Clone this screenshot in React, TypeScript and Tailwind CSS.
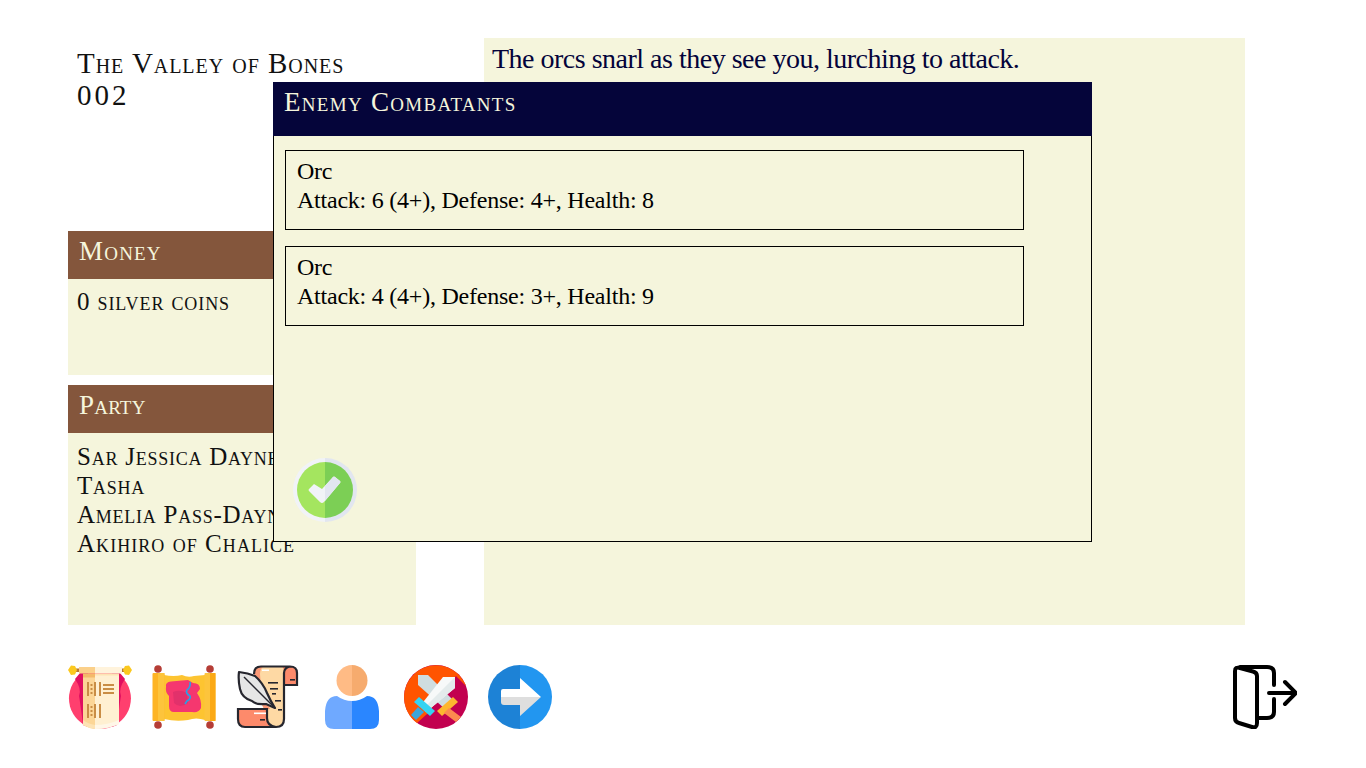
import React from "react";

const serif = "font-['Liberation_Serif',serif]";
const caps = "font-['Liberation_Serif',serif] [font-variant:small-caps]";

function Banner() {
  return (
    <svg viewBox="0 0 64 64" className="w-16 h-16 shrink-0">
      <path d="M32 3 A31 30.5 0 1 1 31.9 3 Z" fill="#ff3f6e" />
      <path d="M7 14 Q14 24 11 31 Q12 36 15 60 L20 62 V8 H12 Z" fill="#e00f60" />
      <path d="M57 14 Q50 24 53 31 Q52 36 49 60 L44 62 V8 H52 Z" fill="#e00f60" />
      <path d="M15 9 H27 V64 Q20 63 15 60 Z" fill="#fcd697" />
      <path d="M27 9 H51 V59 Q40 64 27 64 Z" fill="#fff0d2" />
      <path d="M15 55 Q20 59 27 60 V64 Q20 63 15 60 Z" fill="#fde3b4" />
      <path d="M27 60 Q40 60 51 55 V59 Q40 64 27 64 Z" fill="#fff7e8" />
      <rect x="11" y="2" width="16" height="6.5" fill="#fbd08a" />
      <rect x="27" y="2" width="27" height="6.5" fill="#fff3dc" />
      <rect x="15" y="8.5" width="12" height="4" fill="#f4b96a" />
      <rect x="27" y="8.5" width="24" height="2" fill="#fde3b4" />
      <rect x="8" y="3.5" width="3" height="3.5" fill="#b8782f" />
      <rect x="54" y="3.5" width="3" height="3.5" fill="#b8782f" />
      <path d="M0 5 L3 0.5 L7 1 L9 5 L7 9.5 L3 10 Z" fill="#fbc81f" />
      <path d="M64 5 L61 0.5 L57 1 L55 5 L57 9.5 L61 10 Z" fill="#fbc81f" />
      <g fill="#c98d45">
        <rect x="19" y="17" width="2" height="14" />
        <rect x="26" y="17" width="2" height="14" />
        <rect x="31" y="17" width="2" height="14" />
        <rect x="35" y="19" width="11" height="2" />
        <rect x="35" y="23" width="11" height="2" />
        <rect x="35" y="27" width="11" height="2" />
        <rect x="19" y="39" width="2" height="14" />
        <rect x="26" y="39" width="2" height="14" />
        <rect x="31" y="39" width="2" height="14" />
        <rect x="22.5" y="19" width="2" height="2" />
        <rect x="22.5" y="23" width="2" height="2" />
        <rect x="22.5" y="27" width="2" height="2" />
        <rect x="22.5" y="41" width="2" height="2" />
        <rect x="22.5" y="45" width="2" height="2" />
        <rect x="22.5" y="49" width="2" height="2" />
      </g>
    </svg>
  );
}

function MapScroll() {
  return (
    <svg viewBox="0 0 64 64" className="w-16 h-16 shrink-0">
      <path d="M12 10 Q22 12 30 10 Q36 13 42 11 L53 10 V55 Q44 52 36 55 Q24 57 12 54 Z" fill="#fdc431" />
      <rect x="0.5" y="8" width="12" height="48" rx="1" fill="#fdb424" />
      <rect x="6" y="8" width="6.5" height="48" fill="#fdc43c" />
      <rect x="52.5" y="8" width="11" height="48" rx="1" fill="#fdc43c" />
      <rect x="58" y="8" width="5.5" height="48" fill="#fba915" />
      <circle cx="6" cy="4" r="3.8" fill="#b53d36" />
      <circle cx="58" cy="4" r="3.8" fill="#b53d36" />
      <circle cx="6" cy="60" r="3.8" fill="#b53d36" />
      <circle cx="58" cy="60" r="3.8" fill="#b53d36" />
      <path d="M14 22 Q13 17 19 16.5 L36 15 L41 18 Q48 18 48 24 L45 28 Q50 35 49 43 Q47 48 40 47 H22 Q17 47 17 41 V31 Q13 27 14 22 Z" fill="#f5376f" />
      <path d="M21 27 Q28 24 35 28 L36 38 Q28 44 22 38 Z" fill="#e2316b" />
      <path d="M38 17 Q39 22 35 25 Q33 28 38 31 Q39 34 35 36 L33 39" fill="none" stroke="#2b9fe6" strokeWidth="1.7" />
    </svg>
  );
}

function QuillScroll() {
  return (
    <svg viewBox="0 0 64 64" className="w-16 h-16 shrink-0">
      <path d="M18 9 Q18 1.5 25 1.5 H54 Q61 1.5 61 8 V20 H48 V54 Q48 62 40 62 H9 Q2 62 2 54 V44 H28 Q18 25 18 9 Z" fill="#fed9a4" />
      <path d="M18 9 Q18 1.5 25 1.5 H28 Q24 3 24 9 Q24 25 34 44 H28 Q18 25 18 9 Z" fill="#fd9a78" />
      <path d="M46 1.5 H54 Q61 1.5 61 8 V20 H48 V8 Q48 3 46 1.5 Z" fill="#fd8a6b" />
      <path d="M2 44 H31 V53 Q31 60 39 62 H9 Q2 62 2 54 Z" fill="#fd8a6b" />
      <path d="M18 9 Q18 1.5 25 1.5 H54 Q61 1.5 61 8 V20 H48 V54 Q48 62 40 62 H9 Q2 62 2 54 V44 H31 V53 Q31 61 40 62 M48 20 V8 Q48 3 54 1.5" fill="none" stroke="#26262e" strokeWidth="2.2" />
      <path d="M3 7 Q12 8 19 11 Q27 18 31 28 Q34 35 39 43 L30 39 Q20 40 16 36 Q6 33 4 24 Q2 15 3 7 Z" fill="#e6e6e6" stroke="#26262e" strokeWidth="2.2" strokeLinejoin="round" />
      <path d="M8 12 L39 43" stroke="#26262e" strokeWidth="1.4" />
      <g fill="#26262e">
        <rect x="32" y="17" width="10" height="1.6" />
        <rect x="34" y="23" width="8" height="1.6" />
        <rect x="36" y="28" width="4" height="1.6" />
        <rect x="39" y="35" width="6" height="1.6" />
        <rect x="42" y="44" width="4" height="1.6" />
        <rect x="54" y="14" width="5" height="1.6" />
        <rect x="24" y="54" width="5" height="1.6" />
      </g>
      <rect x="26" y="4.5" width="7" height="1.5" fill="#fff" />
      <rect x="18" y="47.5" width="12" height="1.6" fill="#fff" />
    </svg>
  );
}

function Person() {
  return (
    <svg viewBox="0 0 64 64" className="w-16 h-16 shrink-0">
      <path d="M32 0 A15.5 15.5 0 0 0 32 31 Z" fill="#ffbb85" />
      <path d="M32 0 A15.5 15.5 0 0 1 32 31 Z" fill="#f6ab6e" />
      <path d="M32 36 Q24 36 17 31 Q6 31 5 46 V55 Q5 64 14 64 H32 Z" fill="#6fa9ff" />
      <path d="M32 36 Q40 36 47 31 Q58 31 59 46 V55 Q59 64 50 64 H32 Z" fill="#2a86ff" />
    </svg>
  );
}

function Swords() {
  return (
    <svg viewBox="0 0 64 64" className="w-16 h-16 shrink-0">
      <circle cx="32" cy="32" r="32" fill="#c2004f" />
      <path d="M13 58 A32 32 0 1 1 62 21 L52 11 L23 49 Z" fill="#ff5400" />
      <path d="M14 10 H24 L50 36 L41 44 L14 20 Z" fill="#cfdde0" />
      <path d="M51 12 V23 L22 47 L16 41 L39 12 Z" fill="#f7f9f9" />
      <path d="M51 12 V23 L22 47 L19 44 Z" fill="#e4ebec" />
      <path d="M15 32 L31 46 L26 51 L10 37 Z" fill="#35d3f2" />
      <path d="M14 42 L20 47 L12 55 L7 50 Z" fill="#3ba5dc" />
      <path d="M49 32 L54 37 L38 51 L33 46 Z" fill="#fdb62f" />
      <path d="M45 43 L57 52 L52 57 L40 48 Z" fill="#fd8a4f" />
    </svg>
  );
}

function NextArrow() {
  return (
    <svg viewBox="0 0 64 64" className="w-16 h-16 shrink-0">
      <path d="M32 0 A32 32 0 0 0 32 64 Z" fill="#1d82d6" />
      <path d="M32 0 A32 32 0 0 1 32 64 Z" fill="#2296f0" />
      <path d="M15 24 H32 V13 L53 32 H13 V26 Q13 24 15 24 Z" fill="#fff" />
      <path d="M13 32 H53 L32 51 V40 H16 Q13 40 13 37 Z" fill="#dedede" />
    </svg>
  );
}

function Door() {
  return (
    <svg viewBox="0 0 64 64" className="w-16 h-16 shrink-0" fill="none" stroke="#000" strokeWidth="4" strokeLinecap="round" strokeLinejoin="round">
      <path d="M2 6 Q2 1.5 7 3 L20 6.5 Q24 7.5 24 11 V58 Q24 63.5 19 62 L6 58 Q2 57 2 53 Z" />
      <path d="M7 2 H34 Q41 2 41 8 V20" />
      <path d="M41 34 V47 Q41 53 34 53 H26" />
      <path d="M36 28 H62 M52 17 L63 28 L52 39" />
    </svg>
  );
}

function Check() {
  return (
    <svg viewBox="0 0 64 64" className="w-16 h-16">
      <path d="M32 0 A32 32 0 0 0 32 64 Z" fill="#f1f3f7" />
      <path d="M32 0 A32 32 0 0 1 32 64 Z" fill="#e2e6f0" />
      <path d="M32 4 A28 28 0 0 0 32 60 Z" fill="#a4e55f" />
      <path d="M32 4 A28 28 0 0 1 32 60 Z" fill="#7ccf55" />
      <path d="M16 33 Q15 32 16 31 L21 26 L29 31 L40 19 Q41 18 42 19 L47 23 Q48 24 47 25 L31 44 Q29 46 27 44 Z" fill="#f1f3f7" />
      <path d="M32 28 L40 19 Q41 18 42 19 L47 23 Q48 24 47 25 L32 43 Z" fill="#e2e6f0" />
    </svg>
  );
}

function Card({ stats }: { stats: string }) {
  return (
    <div className={`w-[739px] h-20 border border-black px-[11px] py-[6px] text-[24px] leading-[29px] tracking-[-0.23px] text-black ${serif}`}>
      <div>Orc</div>
      <div>{stats}</div>
    </div>
  );
}

export default function App() {
  return (
    <div className="relative w-[1366px] h-[768px] bg-white overflow-hidden">
      <div className="flex pt-[38px] pl-[68px] gap-[68px] h-[625px]">
        <div className="w-[348px] flex flex-col">
          <div className={`h-[193px] pl-[9px] pt-[9px] text-[29px] leading-[32px] tracking-[0.95px] text-[#111] ${caps}`}>
            <div>The Valley of Bones</div>
            <div className="tracking-[3px]">002</div>
          </div>
          <div className="h-[144px] bg-[#f5f5dc]">
            <div className={`h-12 bg-[#84563c] pl-[11px] pt-[4px] text-[27px] leading-[32px] tracking-[1.2px] text-[#f5f5dc] ${caps}`}>Money</div>
            <div className={`pl-[9px] pt-[8px] text-[25px] leading-[29px] tracking-[0.9px] text-[#111] ${caps}`}>0 silver coins</div>
          </div>
          <div className="mt-[10px] flex-1 bg-[#f5f5dc]">
            <div className={`h-12 bg-[#84563c] pl-[11px] pt-[4px] text-[27px] leading-[32px] tracking-[0.2px] text-[#f5f5dc] ${caps}`}>Party</div>
            <div className={`pl-[9px] pt-[9px] text-[25px] leading-[29px] tracking-[0.75px] text-[#111] ${caps}`}>
              <div>Sar Jessica Dayne</div>
              <div>Tasha</div>
              <div>Amelia Pass-Dayne</div>
              <div className="tracking-[1.05px]">Akihiro of Chalice</div>
            </div>
          </div>
        </div>
        <div className={`w-[761px] bg-[#f5f5dc] pl-2 pt-1 text-[28px] leading-[34px] tracking-[-0.5px] text-[#03033a] ${serif}`}>
          The orcs snarl as they see you, lurching to attack.
        </div>
      </div>

      <div className="flex items-center mt-10 pl-[68px] pr-[69px] gap-5">
        <Banner />
        <MapScroll />
        <QuillScroll />
        <Person />
        <Swords />
        <NextArrow />
        <div className="ml-auto">
          <Door />
        </div>
      </div>

      <div className="absolute left-[273px] top-[82px] w-[819px] h-[460px] bg-[#f5f5dc] border-x border-b border-black flex flex-col">
        <div className={`-mx-px h-[54px] bg-[#05053a] pl-[11px] pt-[2px] text-[27px] leading-[36px] tracking-[1.3px] text-[#f5f5dc] ${caps}`}>
          Enemy Combatants
        </div>
        <div className="flex flex-col gap-4 pl-[11px] pt-[14px]">
          <Card stats="Attack: 6 (4+), Defense: 4+, Health: 8" />
          <Card stats="Attack: 4 (4+), Defense: 3+, Health: 9" />
        </div>
        <div className="mt-auto pl-[19px] pb-[19px]">
          <Check />
        </div>
      </div>
    </div>
  );
}
